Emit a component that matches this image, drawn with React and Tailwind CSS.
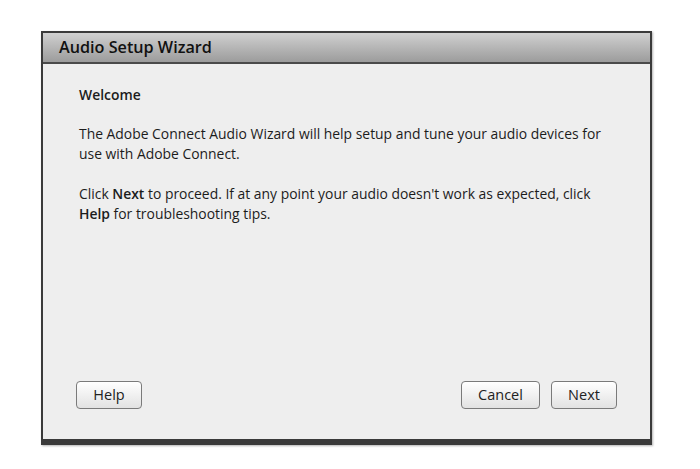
import React from 'react';

const font = { fontFamily: '"Open Sans", "Liberation Sans", sans-serif' };

const WizardButton = ({ label, width }) => (
  <button
    className={`${width} h-[28px] rounded-[4px] border border-[#7a7a7a] bg-gradient-to-b from-[#ffffff] to-[#e2e2e2] text-[14.5px] text-[#222] shadow-[inset_0_1px_0_#fff]`}
  >
    {label}
  </button>
);

export default function App() {
  return (
    <div className="w-[700px] h-[469px] bg-white pt-[31px] pl-[41px]" style={font}>
      <div className="w-[611px] h-[414px] flex flex-col border-2 border-b-[6px] border-[#3a3a3a] shadow-[1px_1px_2px_rgba(0,0,0,0.3)]">
        {/* Title bar */}
        <div className="h-[31px] shrink-0 flex items-center pl-[16px] bg-gradient-to-b from-[#d0d0d0] to-[#9c9c9c] border-b-2 border-[#4a4a4a]">
          <span className="text-[16.2px] font-semibold text-[#111]">Audio Setup Wizard</span>
        </div>

        {/* Body */}
        <div className="flex-1 flex flex-col bg-[#eeeeee] pt-[21px] pb-[30px] pl-[33px] pr-[33px] text-[#1c1c1c]">
          <div className="pl-[3px] text-[13.9px] leading-[20px]">
            <p className="font-semibold">Welcome</p>
            <p className="mt-[19px]">
              The Adobe Connect Audio Wizard will help setup and tune your audio devices for
              <br />
              use with Adobe Connect.
            </p>
            <p className="mt-[20px]">
              Click <span className="font-semibold">Next</span> to proceed. If at any point your audio doesn't work as expected, click
              <br />
              <span className="font-semibold">Help</span> for troubleshooting tips.
            </p>
          </div>

          <div className="mt-auto flex items-center">
            <WizardButton label="Help" width="w-[66px]" />
            <div className="ml-auto flex gap-[11px]">
              <WizardButton label="Cancel" width="w-[79px]" />
              <WizardButton label="Next" width="w-[66px]" />
            </div>
          </div>
        </div>
      </div>
    </div>
  );
}
